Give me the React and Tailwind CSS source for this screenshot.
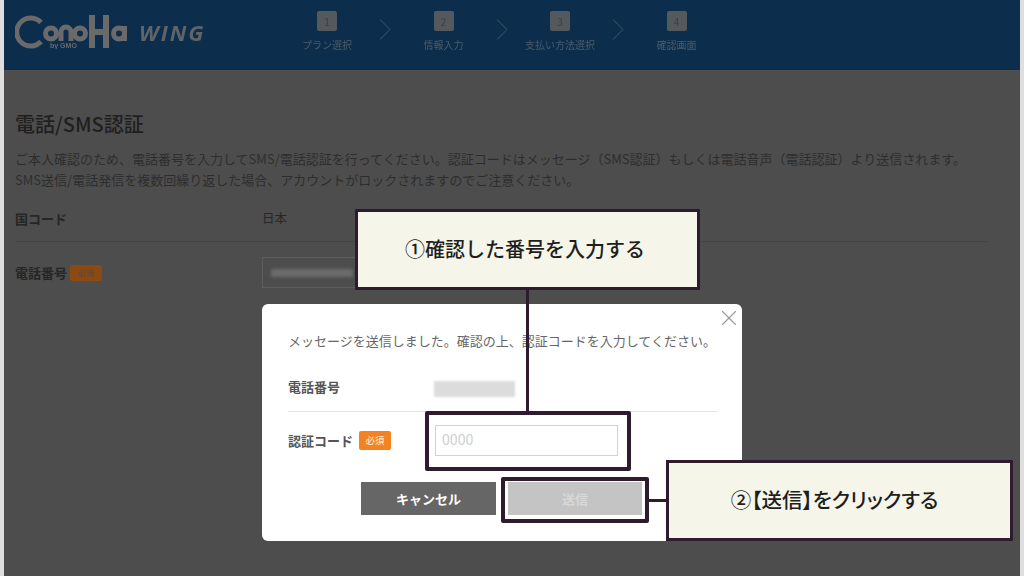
import { X } from 'lucide-react';

const steps = [
  { no: 1, label: 'プラン選択' },
  { no: 2, label: '情報入力' },
  { no: 3, label: '支払い方法選択' },
  { no: 4, label: '確認画面' },
];

// ConoHa mark, drawn from circles and bars
const Logo = () => (
  <div className="flex items-start w-[194px] shrink-0">
    <svg width="112" height="34" viewBox="0 0 112 34" fill="none" stroke="#6a6a6a" strokeWidth="5" className="shrink-0 blur-[0.4px]">
      <path d="M26 7.5 A14 14 0 1 0 26 26.5" strokeWidth="5" />
      <circle cx="36" cy="18.5" r="5.5" />
      <path d="M46 26 V17 A5 5 0 0 1 56 17 V26" />
      <circle cx="65" cy="18.5" r="5.5" />
      <path d="M77 0 V33 M91 0 V33 M77 17 H91" strokeWidth="6" />
      <circle cx="104" cy="18.5" r="5.5" />
      <path d="M109.5 11 V26" />
      <text x="35" y="33" fontSize="7" fontWeight="700" fill="#6a6a6a" stroke="none" fontFamily="Liberation Sans, sans-serif">by GMO</text>
    </svg>
    <span className="ml-[12px] mt-[6px] text-[22px] leading-[22px] font-bold italic tracking-[2px] text-[#5f6468] font-['Open_Sans',sans-serif] blur-[0.3px]">
      WING
    </span>
  </div>
);

const Header = () => (
  <header className="h-[70px] shrink-0 bg-[#0c2d4b] flex items-start pl-[11px]">
    <div className="pt-[15px]">
      <Logo />
    </div>
    <div className="ml-[88px] flex items-start pt-[11px] blur-[0.4px]">
      {steps.map((step, i) => (
        <div key={step.no} className="flex items-start">
          <div className="w-[60px] flex flex-col items-center">
            <div className="w-[20px] h-[20px] rounded-[2px] bg-[#55585c] flex items-center justify-center text-[10px] text-[#3b3f44]">
              {step.no}
            </div>
            <span className="mt-[7px] text-[10px] leading-[14px] whitespace-nowrap text-[#4c5c6b]">{step.label}</span>
          </div>
          {i < 3 && (
            <div className="w-[56.5px] flex justify-center pt-[8px]">
              <svg width="12" height="21" viewBox="0 0 12 21" fill="none" stroke="#46586a" strokeWidth="1">
                <path d="M1 0.5 L11 10.5 L1 20.5" />
              </svg>
            </div>
          )}
        </div>
      ))}
    </div>
  </header>
);

const Main = () => (
  <main className="flex-1 bg-[#4d4d4d] pl-[11px] pr-[32px] pt-[40px] text-[#262626]">
    <h1 className="text-[20px] leading-[28px] font-medium text-[#1f1f1f]">電話/SMS認証</h1>
    <div className="mt-[10px] text-[13px] leading-[21px] text-[#2d2d2d] whitespace-nowrap">
      <p>ご本人確認のため、電話番号を入力してSMS/電話認証を行ってください。認証コードはメッセージ（SMS認証）もしくは電話音声（電話認証）より送信されます。</p>
      <p>SMS送信/電話発信を複数回繰り返した場合、アカウントがロックされますのでご注意ください。</p>
    </div>
    <div className="mt-[6px] flex items-center h-[46px] border-b border-[#444444] text-[13px]">
      <span className="w-[247px] font-bold">国コード</span>
      <span className="text-[12.5px]">日本</span>
    </div>
    <div className="mt-[15px] flex items-start text-[13px]">
      <div className="w-[247px] h-[31px] flex items-center">
        <span className="font-bold">電話番号</span>
        <span className="ml-[3px] w-[32px] h-[16px] rounded-[2px] bg-[#8a4a12] flex items-center justify-center text-[8px] text-[#5a4a3a]">必須</span>
      </div>
      <div className="w-[110px] h-[31px] border border-[#5e5e5e] flex items-center pl-[8px]">
        <div className="w-[82px] h-[8px] bg-[#6b6b6b] blur-[1.5px]" />
      </div>
    </div>
  </main>
);

const Modal = () => (
  <div className="absolute left-[262px] top-[304px] w-[480px] h-[237px] bg-white rounded-[6px] px-[26px] text-[#666666]">
    <X size={26} strokeWidth={1} className="absolute right-0 top-[1px] text-[#999999]" />
    <p className="pt-[26px] text-[13px] leading-[22px] whitespace-nowrap">
      メッセージを送信しました。確認の上、認証コードを入力してください。
    </p>
    <div className="mt-[24px] h-[36px] w-[429px] flex items-start border-b border-[#e2e2e2]">
      <span className="w-[146px] text-[13px] leading-[22px] font-bold text-[#555555]">電話番号</span>
      <div className="mt-[5px] w-[81px] h-[16px] bg-[#dcdcdc] blur-[1px]" />
    </div>
    <div className="mt-[13px] flex items-start">
      <div className="w-[147px] h-[31px] flex items-center">
        <span className="text-[13px] font-bold text-[#555555] whitespace-nowrap">認証コード</span>
        <span className="ml-[6px] w-[32px] h-[19px] rounded-[2px] bg-[#f58220] flex items-center justify-center text-[9.5px] font-medium text-[#fde3c8]">必須</span>
      </div>
      <div className="w-[183px] h-[31px] border border-[#d2d2d2] flex items-center pl-[6px] text-[14px] text-[#d0d0d0] font-['Roboto',sans-serif]">
        0000
      </div>
    </div>
    <div className="mt-[26px] ml-[73px] flex gap-[12px]">
      <div className="w-[135px] h-[33px] bg-[#666666] flex items-center justify-center text-[13px] font-bold text-white">キャンセル</div>
      <div className="w-[134px] h-[33px] bg-[#c4c4c4] flex items-center justify-center text-[13px] font-bold text-[#d8d8d8]">送信</div>
    </div>
  </div>
);

const Callout = ({ className, children }) => (
  <div className={`absolute border-[3px] border-[#2e1b2e] bg-[#f5f5e9] flex items-center justify-center font-medium text-[#1e1e1e] whitespace-nowrap ${className}`}>
    {children}
  </div>
);

const Annotations = () => (
  <>
    <Callout className="left-[355px] top-[209px] w-[345px] h-[81px] pb-[2px] pr-[5px] text-[20px]">①確認した番号を入力する</Callout>
    <div className="absolute left-[526px] top-[290px] w-[3px] h-[122px] bg-[#2e1b2e]" />
    <div className="absolute left-[425px] top-[411px] w-[206px] h-[60px] border-[4px] border-[#2e1b2e] rounded-[2px]" />
    <div className="absolute left-[501px] top-[477px] w-[148px] h-[46px] border-[4px] border-[#2e1b2e] rounded-[2px]" />
    <div className="absolute left-[648px] top-[499px] w-[19px] h-[3px] bg-[#2e1b2e]" />
    <Callout className="left-[666px] top-[460px] w-[347px] h-[81px] pb-[2px] pr-[10px] text-[20.5px] [font-feature-settings:'palt']">②【送信】をクリックする</Callout>
  </>
);

export default function App() {
  return (
    <div className="relative w-[1024px] h-[576px] overflow-hidden bg-[#dedede] pl-[4px] pr-[4px] font-['Noto_Sans_CJK_JP','Noto_Sans',sans-serif]">
      <div className="h-full flex flex-col">
        <Header />
        <Main />
      </div>
      <Modal />
      <Annotations />
    </div>
  );
}
